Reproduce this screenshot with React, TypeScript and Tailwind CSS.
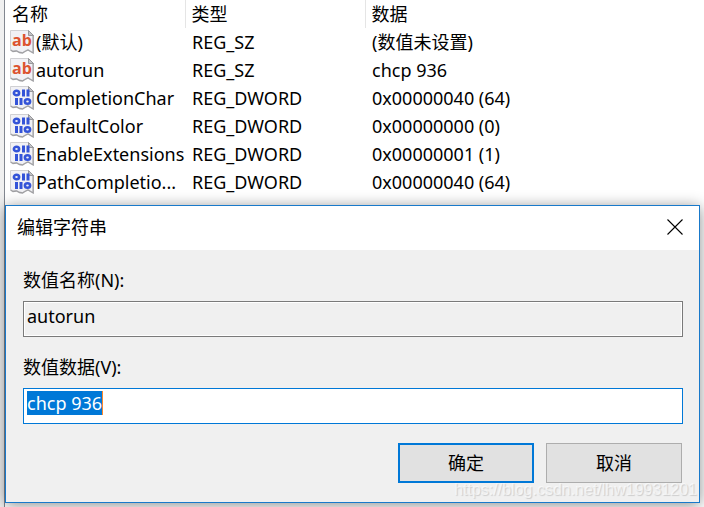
import { useEffect, useRef } from 'react';

type ValueType = 'REG_SZ' | 'REG_DWORD';

interface RegistryValue {
  name: string;
  type: ValueType;
  data: string;
}

const values: RegistryValue[] = [
  { name: '(默认)', type: 'REG_SZ', data: '(数值未设置)' },
  { name: 'autorun', type: 'REG_SZ', data: 'chcp 936' },
  { name: 'CompletionChar', type: 'REG_DWORD', data: '0x00000040 (64)' },
  { name: 'DefaultColor', type: 'REG_DWORD', data: '0x00000000 (0)' },
  { name: 'EnableExtensions', type: 'REG_DWORD', data: '0x00000001 (1)' },
  { name: 'PathCompletio...', type: 'REG_DWORD', data: '0x00000040 (64)' },
];

function ValueIcon({ type }: { type: ValueType }) {
  return (
    <svg width="24" height="24" viewBox="0 0 24 24" className="shrink-0" aria-hidden="true">
      {/* torn sheet with a folded corner */}
      <path
        d="M.5.5H18.5L23 5V22.5L20.5 21L18 19.5L15 21L12.5 22.5L9.5 22L6.5 20.5L3 21L.5 19.5Z"
        fill="#f1f1f5"
        stroke="#d0d0d3"
      />
      <path d="M23.2 5V23L20.5 21.5L18 20L15 21.5L12.5 23L9.5 22.5L6.5 21L3 21.5L.5 20" fill="none" stroke="#a0a0a3" strokeWidth="1.3" />
      <path d="M18.5.5L23.5 5.5H18.5Z" fill="#c2c2c5" stroke="#98989b" />
      {type === 'REG_SZ' ? (
        <text x="2" y="16" fontSize="16" fontWeight="700" fill="#dc5430" className="font-['Open_Sans',sans-serif]">
          ab
        </text>
      ) : (
        <g fill="none" stroke="#3454d8">
          <ellipse cx="6.5" cy="7" rx="2.6" ry="2.2" strokeWidth="2.6" />
          <path d="M13.5 3.5V10.5M18 3.5V10.5" strokeWidth="3" />
          <path d="M6.5 12V19M11 12V19" strokeWidth="3" />
          <ellipse cx="17.5" cy="15.5" rx="2.6" ry="2.2" strokeWidth="2.6" />
        </g>
      )}
    </svg>
  );
}

function ValueTable() {
  return (
    <table className="w-full table-fixed border-collapse text-left">
      <thead>
        <tr className="h-7">
          <th className="w-[180px] border-r border-[#e5e5e5] p-0 pl-[7px] font-normal">名称</th>
          <th className="w-[180px] border-r border-[#e5e5e5] p-0 pl-1.5 font-normal">类型</th>
          <th className="p-0 pl-1.5 font-normal">数据</th>
        </tr>
      </thead>
      <tbody>
        {values.map((value) => (
          <tr key={value.name} className="h-7 whitespace-nowrap">
            <td className="p-0 pl-[5px]">
              <div className="flex items-center gap-0.5">
                <ValueIcon type={value.type} />
                {value.name}
              </div>
            </td>
            <td className="p-0 pl-[7px]">{value.type}</td>
            <td className="p-0 pl-[7px]">{value.data}</td>
          </tr>
        ))}
      </tbody>
    </table>
  );
}

function EditStringDialog() {
  const dataRef = useRef<HTMLInputElement>(null);

  useEffect(() => {
    dataRef.current?.focus();
    dataRef.current?.select();
  }, []);

  return (
    <div
      role="dialog"
      aria-labelledby="dialog-title"
      className="relative mt-[9px] mr-1 mb-1 border border-[#1979ca] bg-[#f0f0f0] shadow-[0_2px_14px_rgba(0,0,0,0.45)]"
    >
      <div className="flex h-11 items-center justify-between bg-white pr-4 pb-0.5 pl-[11px]">
        <h1 id="dialog-title">编辑字符串</h1>
        <button type="button" aria-label="关闭" className="flex h-4 w-4 items-center justify-center">
          <svg width="16" height="16" viewBox="0 0 16 16" stroke="#000" strokeWidth="1.1">
            <path d="M.5.5L15.5 15.5M15.5.5L.5 15.5" />
          </svg>
        </button>
      </div>
      <form className="flex flex-col pt-4 pr-4 pb-[19px] pl-[17px]" onSubmit={(e) => e.preventDefault()}>
        <label htmlFor="value-name" className="mb-[7px]">
          数值名称(N):
        </label>
        <input
          id="value-name"
          type="text"
          readOnly
          value="autorun"
          className="h-9 w-full border border-[#7a7a7a] bg-[#f0f0f0] px-[3px] pb-1.5 shadow-[inset_0_0_0_1px_#fff] outline-none"
        />
        <label htmlFor="value-data" className="mt-4 mb-[7px]">
          数值数据(V):
        </label>
        <div className="relative">
          <input
            id="value-data"
            ref={dataRef}
            type="text"
            defaultValue="chcp 936"
            className="block h-9 w-full border border-[#0078d7] bg-white px-[3px] pb-1.5 outline-none selection:bg-[#0078d7] selection:text-white"
          />
          <span className="absolute top-[3px] left-[79px] h-6 w-px bg-[#ff8728]" />
        </div>
        <div className="mt-[19px] flex justify-end gap-3 pr-px">
          <button type="submit" className="h-10 w-[136px] border-2 border-[#0078d7] bg-[#e1e1e1]">
            确定
          </button>
          <button type="button" className="h-10 w-[136px] border border-[#adadad] bg-[#e1e1e1]">
            取消
          </button>
        </div>
      </form>
      <span className="absolute right-0.5 bottom-0 font-['Liberation_Sans',sans-serif] text-base text-white/60 [text-shadow:1px_1px_1px_rgba(0,0,0,0.15)]">
        https://blog.csdn.net/lhw19931201
      </span>
    </div>
  );
}

export default function App() {
  return (
    <div className="flex min-h-screen overflow-hidden bg-white font-['Noto_Sans','Noto_Sans_CJK_SC',sans-serif] text-[18px] leading-7 text-black">
      <div className="w-[5px] shrink-0 border-r border-[#828790] bg-[#f0f0f0]" />
      <main className="min-w-0 flex-1">
        <ValueTable />
        <EditStringDialog />
      </main>
    </div>
  );
}
